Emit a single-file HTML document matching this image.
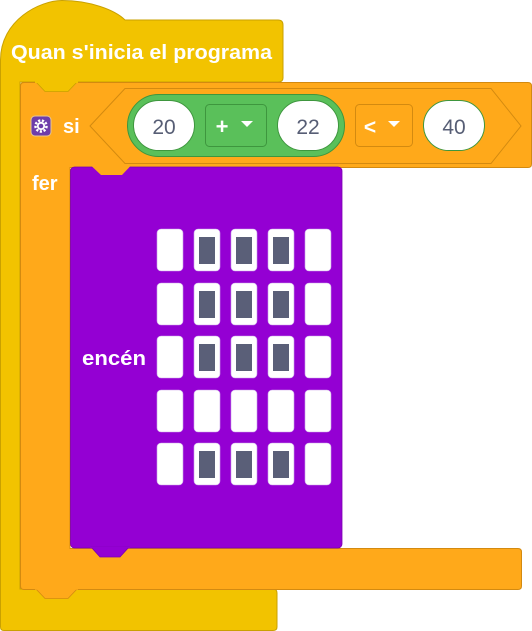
<!DOCTYPE html>
<html><head><meta charset="utf-8"><style>
html,body{margin:0;padding:0;background:#fff;width:532px;height:631px;overflow:hidden}
text{font-family:"Liberation Sans",sans-serif;font-weight:bold}
</style></head><body>
<svg width="532" height="631" viewBox="0 0 532 631" xmlns="http://www.w3.org/2000/svg">
<path d="M0.5,60 C0.5,20 40,0.5 62,0.5 C90,0.5 115,10 125,20 L278,20 Q283,20 283,25 L283,78 Q283,82 278,82 L20,82 L20,589 L273,589 Q277,589 277,593 L277,627 Q277,630.5 273,630.5 L4,630.5 Q0.5,630.5 0.5,627 Z" fill="#F2C300" stroke="#C9A100"/>
<text x="11" y="59" font-size="20" fill="#fff" textLength="261" lengthAdjust="spacingAndGlyphs">Quan s'inicia el programa</text>
<path d="M20.5,86 Q20.5,82.5 24,82.5 L528,82.5 Q531.5,82.5 531.5,86 L531.5,164 Q531.5,167.5 528,167.5 L70,167.5 L70,548.5 L518,548.5 Q521.5,548.5 521.5,552 L521.5,586 Q521.5,589.5 518,589.5 L24,589.5 Q20.5,589.5 20.5,586 Z" fill="#FFA91A" stroke="#D38A10"/>
<path d="M36,82 L45,91.5 L68,91.5 L77,82 Z" fill="#F2C300" stroke="#C9A100" stroke-width="0.8"/>
<path d="M35,82.2 L78,82.2" stroke="#F2C300" stroke-width="1.5"/>
<path d="M36,589 L45,598.5 L68,598.5 L77,589 Z" fill="#FFA91A" stroke="#D38A10" stroke-width="0.8"/>
<path d="M35,589 L78,589" stroke="#FFA91A" stroke-width="1.5"/>
<path d="M90,126 L125,88.5 L491,88.5 L521,126 L491,163.5 L125,163.5 Z" fill="#FFA91A" stroke="#D38A10"/>
<rect x="31" y="116" width="20" height="20" rx="4" fill="#6E3DAA" stroke="#E7C893"/>
<circle cx="41" cy="126" r="5.5" fill="none" stroke="#fff" stroke-width="2.5" stroke-dasharray="2.2 1.6"/>
<circle cx="41" cy="126" r="3.2" fill="none" stroke="#fff" stroke-width="1.8"/>
<text x="63" y="133" font-size="20" fill="#fff">si</text>
<text x="32" y="190" font-size="20" fill="#fff">fer</text>
<rect x="127.5" y="94.5" width="217" height="62" rx="31" fill="#5AC05A" stroke="#3E963E"/>
<rect x="133.5" y="100.5" width="61" height="50" rx="25" fill="#fff" stroke="#3E963E"/>
<text x="164" y="134" font-size="21" fill="#575E75" text-anchor="middle" style="font-weight:normal">20</text>
<rect x="205.5" y="104.5" width="61" height="42" rx="4" fill="#5AC05A" stroke="#3E963E"/>
<text x="222" y="134" font-size="22" fill="#fff" text-anchor="middle">+</text>
<path d="M241,121 L253,121 L247,127 Z" fill="#fff"/>
<rect x="277.5" y="100.5" width="61" height="50" rx="25" fill="#fff" stroke="#3E963E"/>
<text x="308" y="134" font-size="21" fill="#575E75" text-anchor="middle" style="font-weight:normal">22</text>
<rect x="355.5" y="104.5" width="57" height="42" rx="4" fill="#FFA91A" stroke="#D38A10"/>
<text x="370" y="134" font-size="21" fill="#fff" text-anchor="middle">&lt;</text>
<path d="M388,121 L400,121 L394,127 Z" fill="#fff"/>
<rect x="423.5" y="100.5" width="61" height="50" rx="25" fill="#fff" stroke="#3E963E"/>
<text x="454" y="134" font-size="21" fill="#575E75" text-anchor="middle" style="font-weight:normal">40</text>
<rect x="70.5" y="167" width="271.5" height="381" rx="4" fill="#9400D3" stroke="#7A00B0" stroke-width="0.8"/>
<path d="M92,166.5 L101,175 L122,175 L130,166.5 Z" fill="#FFA91A"/>
<path d="M91,547 L100,557 L120,557 L129,547 Z" fill="#9400D3" stroke="#7A00B0" stroke-width="0.8"/>
<path d="M90,547.5 L130,547.5" stroke="#9400D3" stroke-width="1.5"/>
<text x="82" y="365" font-size="20" fill="#fff" textLength="64" lengthAdjust="spacingAndGlyphs">encén</text>
<g fill="#fff" stroke="#C9A0E8" stroke-width="0.6">
<rect x="157" y="229" width="26" height="42" rx="4"/><rect x="194" y="229" width="26" height="42" rx="4"/><rect x="231" y="229" width="26" height="42" rx="4"/><rect x="268" y="229" width="26" height="42" rx="4"/><rect x="305" y="229" width="26" height="42" rx="4"/>
<rect x="157" y="283" width="26" height="42" rx="4"/><rect x="194" y="283" width="26" height="42" rx="4"/><rect x="231" y="283" width="26" height="42" rx="4"/><rect x="268" y="283" width="26" height="42" rx="4"/><rect x="305" y="283" width="26" height="42" rx="4"/>
<rect x="157" y="336" width="26" height="42" rx="4"/><rect x="194" y="336" width="26" height="42" rx="4"/><rect x="231" y="336" width="26" height="42" rx="4"/><rect x="268" y="336" width="26" height="42" rx="4"/><rect x="305" y="336" width="26" height="42" rx="4"/>
<rect x="157" y="390" width="26" height="42" rx="4"/><rect x="194" y="390" width="26" height="42" rx="4"/><rect x="231" y="390" width="26" height="42" rx="4"/><rect x="268" y="390" width="26" height="42" rx="4"/><rect x="305" y="390" width="26" height="42" rx="4"/>
<rect x="157" y="443" width="26" height="42" rx="4"/><rect x="194" y="443" width="26" height="42" rx="4"/><rect x="231" y="443" width="26" height="42" rx="4"/><rect x="268" y="443" width="26" height="42" rx="4"/><rect x="305" y="443" width="26" height="42" rx="4"/>
</g>
<g fill="#5A5F78">
<rect x="199" y="237" width="16" height="27"/><rect x="236" y="237" width="16" height="27"/><rect x="273" y="237" width="16" height="27"/>
<rect x="199" y="291" width="16" height="27"/><rect x="236" y="291" width="16" height="27"/><rect x="273" y="291" width="16" height="27"/>
<rect x="199" y="344" width="16" height="27"/><rect x="236" y="344" width="16" height="27"/><rect x="273" y="344" width="16" height="27"/>
<rect x="199" y="451" width="16" height="27"/><rect x="236" y="451" width="16" height="27"/><rect x="273" y="451" width="16" height="27"/>
</g>
</svg>
</body></html>
